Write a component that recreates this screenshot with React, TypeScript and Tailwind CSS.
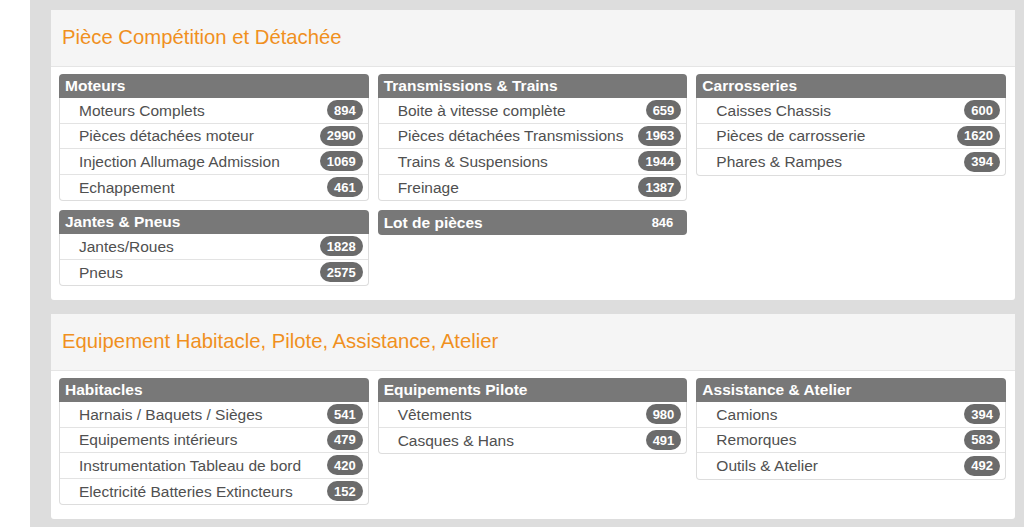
import React from "react";

type Item = { label: string; count: number };
type Box = { title: string; items: Item[]; count?: number };

const panel1: Box[][] = [
  [
    {
      title: "Moteurs",
      items: [
        { label: "Moteurs Complets", count: 894 },
        { label: "Pièces détachées moteur", count: 2990 },
        { label: "Injection Allumage Admission", count: 1069 },
        { label: "Echappement", count: 461 },
      ],
    },
    {
      title: "Jantes & Pneus",
      items: [
        { label: "Jantes/Roues", count: 1828 },
        { label: "Pneus", count: 2575 },
      ],
    },
  ],
  [
    {
      title: "Transmissions & Trains",
      items: [
        { label: "Boite à vitesse complète", count: 659 },
        { label: "Pièces détachées Transmissions", count: 1963 },
        { label: "Trains & Suspensions", count: 1944 },
        { label: "Freinage", count: 1387 },
      ],
    },
    { title: "Lot de pièces", items: [], count: 846 },
  ],
  [
    {
      title: "Carrosseries",
      items: [
        { label: "Caisses Chassis", count: 600 },
        { label: "Pièces de carrosserie", count: 1620 },
        { label: "Phares & Rampes", count: 394 },
      ],
    },
  ],
];

const panel2: Box[][] = [
  [
    {
      title: "Habitacles",
      items: [
        { label: "Harnais / Baquets / Sièges", count: 541 },
        { label: "Equipements intérieurs", count: 479 },
        { label: "Instrumentation Tableau de bord", count: 420 },
        { label: "Electricité Batteries Extincteurs", count: 152 },
      ],
    },
  ],
  [
    {
      title: "Equipements Pilote",
      items: [
        { label: "Vêtements", count: 980 },
        { label: "Casques & Hans", count: 491 },
      ],
    },
  ],
  [
    {
      title: "Assistance & Atelier",
      items: [
        { label: "Camions", count: 394 },
        { label: "Remorques", count: 583 },
        { label: "Outils & Atelier", count: 492 },
      ],
    },
  ],
];

function Badge({ n }: { n: number }) {
  return (
    <span className="flex h-[20px] items-center rounded-full bg-[#6b6b6b] px-[7px] text-[13px] font-bold leading-none text-white">
      {n}
    </span>
  );
}

function CatBox({ box }: { box: Box }) {
  if (box.items.length === 0) {
    return (
      <div className="flex h-[25px] items-center justify-between rounded-[4px] bg-[#787878] pl-[6px] pr-[14px] text-[15.5px] font-bold text-white">
        <span>{box.title}</span>
        <span className="text-[13px]">{box.count}</span>
      </div>
    );
  }
  return (
    <div className="flex flex-col">
      <div className="flex h-[24px] items-center rounded-t-[4px] bg-[#787878] pl-[6px] text-[15.5px] font-bold text-white">
        {box.title}
      </div>
      <div className="rounded-b-[4px] border-x border-b border-[#dddddd] bg-white">
        {box.items.map((it, i) => (
          <div
            key={it.label}
            className={
              "flex h-[25.5px] items-center justify-between pl-[19px] pr-[5px] text-[15.5px] text-[#505050] " +
              (i < box.items.length - 1 ? "border-b border-[#e3e3e3]" : "")
            }
          >
            <span>{it.label}</span>
            <Badge n={it.count} />
          </div>
        ))}
      </div>
    </div>
  );
}

function Panel({ title, cols }: { title: string; cols: Box[][] }) {
  return (
    <div className="rounded-[3px] bg-white">
      <div className="flex h-[57px] items-center border-b border-[#e5e5e5] bg-[#f5f5f5] pb-[2px] pl-[11px] text-[20.3px] text-[#f0901e]">
        {title}
      </div>
      <div className="grid grid-cols-3 gap-x-[9px] pb-[14px] pl-[8px] pr-[9px] pt-[7px]">
        {cols.map((col, ci) => (
          <div key={ci} className="flex flex-col gap-[9px]">
            {col.map((b) => (
              <CatBox key={b.title} box={b} />
            ))}
          </div>
        ))}
      </div>
    </div>
  );
}

export default function App() {
  return (
    <div
      className="flex min-h-[527px] bg-white"
      style={{ fontFamily: '"Liberation Sans", Arial, sans-serif' }}
    >
      <div className="w-[30px] shrink-0" />
      <div className="flex flex-1 flex-col gap-[14px] bg-[#dddddd] pl-[21px] pr-[9px] pt-[10px] pb-[10px]">
        <Panel title="Pièce Compétition et Détachée" cols={panel1} />
        <Panel title="Equipement Habitacle, Pilote, Assistance, Atelier" cols={panel2} />
      </div>
    </div>
  );
}
